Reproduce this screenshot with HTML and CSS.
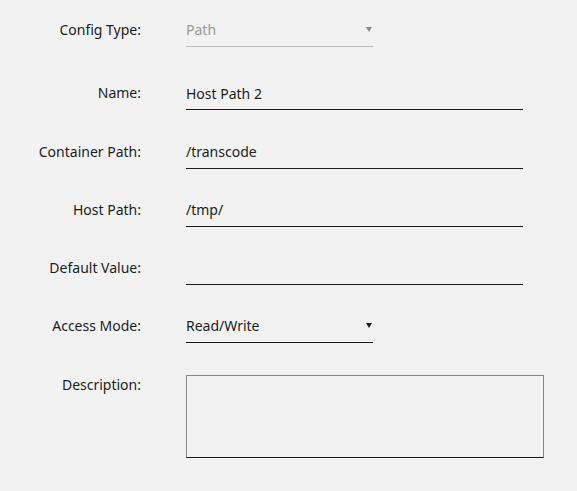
FILE: index.html
```html
<!DOCTYPE html>
<html lang="en">
<head>
    <meta charset="UTF-8">
    <meta name="viewport" content="width=device-width, initial-scale=1.0">
    <title>Add Path</title>
    <link rel="stylesheet" href="styles.css">
</head>
<body>
    <form class="config-form">
        <div class="form-row row-type">
            <label class="form-label">Config Type:</label>
            <div class="select-wrap select-short disabled">
                <select disabled>
                    <option>Path</option>
                </select>
            </div>
        </div>
        <div class="form-row">
            <label class="form-label" for="cfgName">Name:</label>
            <input type="text" id="cfgName" class="text-input" value="Host Path 2">
        </div>
        <div class="form-row">
            <label class="form-label" for="cfgTarget">Container Path:</label>
            <input type="text" id="cfgTarget" class="text-input" value="/transcode">
        </div>
        <div class="form-row">
            <label class="form-label" for="cfgValue">Host Path:</label>
            <input type="text" id="cfgValue" class="text-input" value="/tmp/">
        </div>
        <div class="form-row">
            <label class="form-label" for="cfgDefault">Default Value:</label>
            <input type="text" id="cfgDefault" class="text-input" value="">
        </div>
        <div class="form-row">
            <label class="form-label" for="cfgMode">Access Mode:</label>
            <div class="select-wrap select-short">
                <select id="cfgMode">
                    <option>Read/Write</option>
                    <option>Read Only</option>
                </select>
            </div>
        </div>
        <div class="form-row row-top">
            <label class="form-label" for="cfgDesc">Description:</label>
            <textarea id="cfgDesc" class="text-area"></textarea>
        </div>
    </form>
</body>
</html>
```

FILE: styles.css
```css
body {
    margin: 0;
    background: #f2f2f2;
    color: #1c1c1c;
    font-family: 'Noto Sans', 'Open Sans', sans-serif;
    font-size: 14px;
}
.config-form {
    display: flex;
    flex-direction: column;
    gap: 27.25px;
    padding-top: 16px;
}
.form-row {
    display: grid;
    grid-template-columns: 141px 1fr;
    column-gap: 45px;
    align-items: start;
}
.row-type {
    margin-bottom: 5px;
}
.row-top {
    margin-top: 4px;
}
.form-label {
    text-align: right;
    line-height: 20px;
    padding-top: 4px;
}
.row-top .form-label {
    padding-top: 0;
}
.text-input,
.select-wrap select {
    font: inherit;
    color: inherit;
    line-height: 20px;
    height: 31px;
    padding: 4px 0 6px 0;
    border: none;
    border-bottom: 1px solid #1c1c1c;
    background: transparent;
    outline: none;
    box-sizing: border-box;
    border-radius: 0;
}
.text-input {
    width: 337px;
}
.select-wrap {
    position: relative;
    width: 187px;
}
.select-wrap select {
    width: 100%;
    -webkit-appearance: none;
    appearance: none;
}
.select-wrap::after {
    content: '';
    position: absolute;
    right: 1px;
    top: 11px;
    border-left: 3px solid transparent;
    border-right: 3px solid transparent;
    border-top: 5px solid #1c1c1c;
}
.select-wrap.disabled select {
    color: #999;
    border-bottom-color: #bbb;
    opacity: 1;
}
.select-wrap.disabled::after {
    border-top-color: #888;
}
.text-area {
    width: 358px;
    height: 83px;
    box-sizing: border-box;
    margin: 0;
    border: 1px solid #888;
    border-bottom-color: #1c1c1c;
    background: transparent;
    font: inherit;
    resize: none;
    outline: none;
}
```
